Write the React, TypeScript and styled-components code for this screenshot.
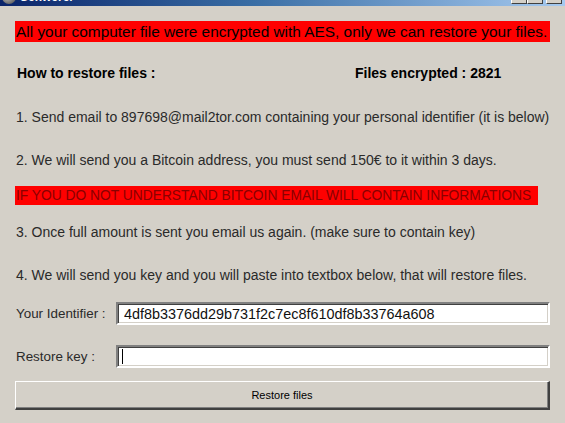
import styled, { createGlobalStyle } from 'styled-components';

const GlobalStyle = createGlobalStyle`
  html, body { margin: 0; padding: 0; background: #d4d0c8; }
  body { font-family: "Liberation Sans", Arial, sans-serif; color: #1c1c1c; }
`;

const App = () => {
    return (
        <>
            <GlobalStyle />
            <Window>
                <TitleBar>
                    <TitleLeft>
                        <TitleIcon />
                        <TitleText>Schwerer</TitleText>
                    </TitleLeft>
                    <Controls>
                        <CtrlButton />
                        <CtrlButton />
                        <CtrlButton $gap />
                    </Controls>
                </TitleBar>

                <Content>
                    <Banner $top={15} $height={21} $size={15.4} $color="#000">
                        All your computer file were encrypted with AES, only we can restore your files.
                    </Banner>

                    <HeaderRow>
                        <span>How to restore files :</span>
                        <span>Files encrypted : 2821</span>
                    </HeaderRow>

                    <Step $top={28}>1. Send email to 897698@mail2tor.com containing your personal identifier (it is below)</Step>
                    <Step $top={27}>2. We will send you a Bitcoin address, you must send 150€ to it within 3 days.</Step>

                    <Banner $top={18} $height={19} $size={13.8} $color="#8a0000" $width={522}>
                        IF YOU DO NOT UNDERSTAND BITCOIN EMAIL WILL CONTAIN INFORMATIONS
                    </Banner>

                    <Step $top={19}>3. Once full amount is sent you email us again. (make sure to contain key)</Step>
                    <Step $top={27}>4. We will send you key and you will paste into textbox below, that will restore files.</Step>

                    <FieldRow $top={19}>
                        <FieldLabel>Your Identifier :</FieldLabel>
                        <BoxWrap>
                            <TextBox readOnly value="4df8b3376dd29b731f2c7ec8f610df8b33764a608" />
                        </BoxWrap>
                    </FieldRow>
                    <FieldRow $top={20}>
                        <FieldLabel>Restore key :</FieldLabel>
                        <BoxWrap>
                            <TextBox defaultValue="" />
                            <Caret />
                        </BoxWrap>
                    </FieldRow>

                    <RestoreButton>Restore files</RestoreButton>
                </Content>
            </Window>
        </>
    );
};

const Window = styled.div`
  width: 565px; height: 423px; overflow: hidden;
  display: flex; flex-direction: column;
  background: #d4d0c8;
`;

/* only the bottom strip of the caption is visible in the shot */
const TitleBar = styled.div`
  height: 18px; margin-top: -12px; flex-shrink: 0;
  display: flex; align-items: center; justify-content: space-between;
  padding: 0 3px 0 2px;
  background: linear-gradient(90deg, #0a246a 0%, #3a6ea5 45%, #a6caf0 100%);
`;

const TitleLeft = styled.div` display: flex; align-items: center; gap: 4px; `;

const TitleIcon = styled.div`
  width: 14px; height: 14px; border-radius: 50%;
  background: radial-gradient(circle at 40% 40%, #c8c8c8 0%, #6b6b6b 70%);
`;

const TitleText = styled.span`
  color: #fff; font-weight: bold; font-size: 12px;
  font-family: "Liberation Sans", Arial, sans-serif;
`;

const Controls = styled.div` display: flex; `;

const CtrlButton = styled.div<{ $gap?: boolean }>`
  width: 14px; height: 12px; margin-left: ${(p) => (p.$gap ? '3px' : '0')};
  background: #d4d0c8;
  border: 1px solid; border-color: #fff #404040 #404040 #fff;
`;

const Content = styled.div`
  display: flex; flex-direction: column;
  padding: 0 15px;
`;

const Banner = styled.div<{ $top: number; $height: number; $size: number; $color: string; $width?: number }>`
  margin-top: ${(p) => p.$top}px;
  height: ${(p) => p.$height}px; line-height: ${(p) => p.$height}px;
  width: ${(p) => (p.$width ? `${p.$width}px` : 'auto')};
  background: #ff0000; color: ${(p) => p.$color};
  font-size: ${(p) => p.$size}px; white-space: nowrap; overflow: hidden;
  padding-left: 1px;
`;

const HeaderRow = styled.div`
  margin-top: 23px; height: 16px; line-height: 16px;
  display: grid; grid-template-columns: 338px 1fr;
  font-weight: bold; font-size: 14px; color: #000;
  padding-left: 2px;
`;

const Step = styled.p<{ $top: number }>`
  margin: ${(p) => p.$top}px 0 0; height: 16px; line-height: 16px;
  font-size: 14px; color: #2a2a2a; white-space: nowrap;
  padding-left: 1px;
`;

const FieldRow = styled.div<{ $top: number }>`
  margin-top: ${(p) => p.$top}px;
  display: grid; grid-template-columns: 101px 1fr; align-items: center;
`;

const FieldLabel = styled.label` font-size: 13.4px; color: #2a2a2a; padding-left: 1px; `;

const BoxWrap = styled.div` position: relative; height: 23px; `;

const TextBox = styled.input`
  box-sizing: border-box; height: 23px; width: 100%;
  margin: 0; padding: 0 6px;
  background: #fff; color: #111;
  font-family: "Liberation Sans", Arial, sans-serif; font-size: 14.4px;
  border-style: solid; border-width: 2px;
  border-color: #808080 #ffffff #ffffff #808080;
  box-shadow: inset 1px 1px 0 #404040, inset -1px -1px 0 #d4d0c8;
  outline: none;
`;

/* blinking text cursor captured in the screenshot */
const Caret = styled.span`
  position: absolute; left: 6px; top: 4px;
  width: 1px; height: 15px; background: #000;
`;

const RestoreButton = styled.button`
  margin-top: 13px; height: 29px; width: 100%;
  box-sizing: border-box;
  background: #d4d0c8; color: #000;
  font-family: "Liberation Sans", Arial, sans-serif; font-size: 11px;
  border-style: solid; border-width: 1px 2px 2px 1px;
  border-color: #ffffff #404040 #404040 #ffffff;
  box-shadow: inset -1px -1px 0 #808080;
  padding: 0;
`;

export default App;
